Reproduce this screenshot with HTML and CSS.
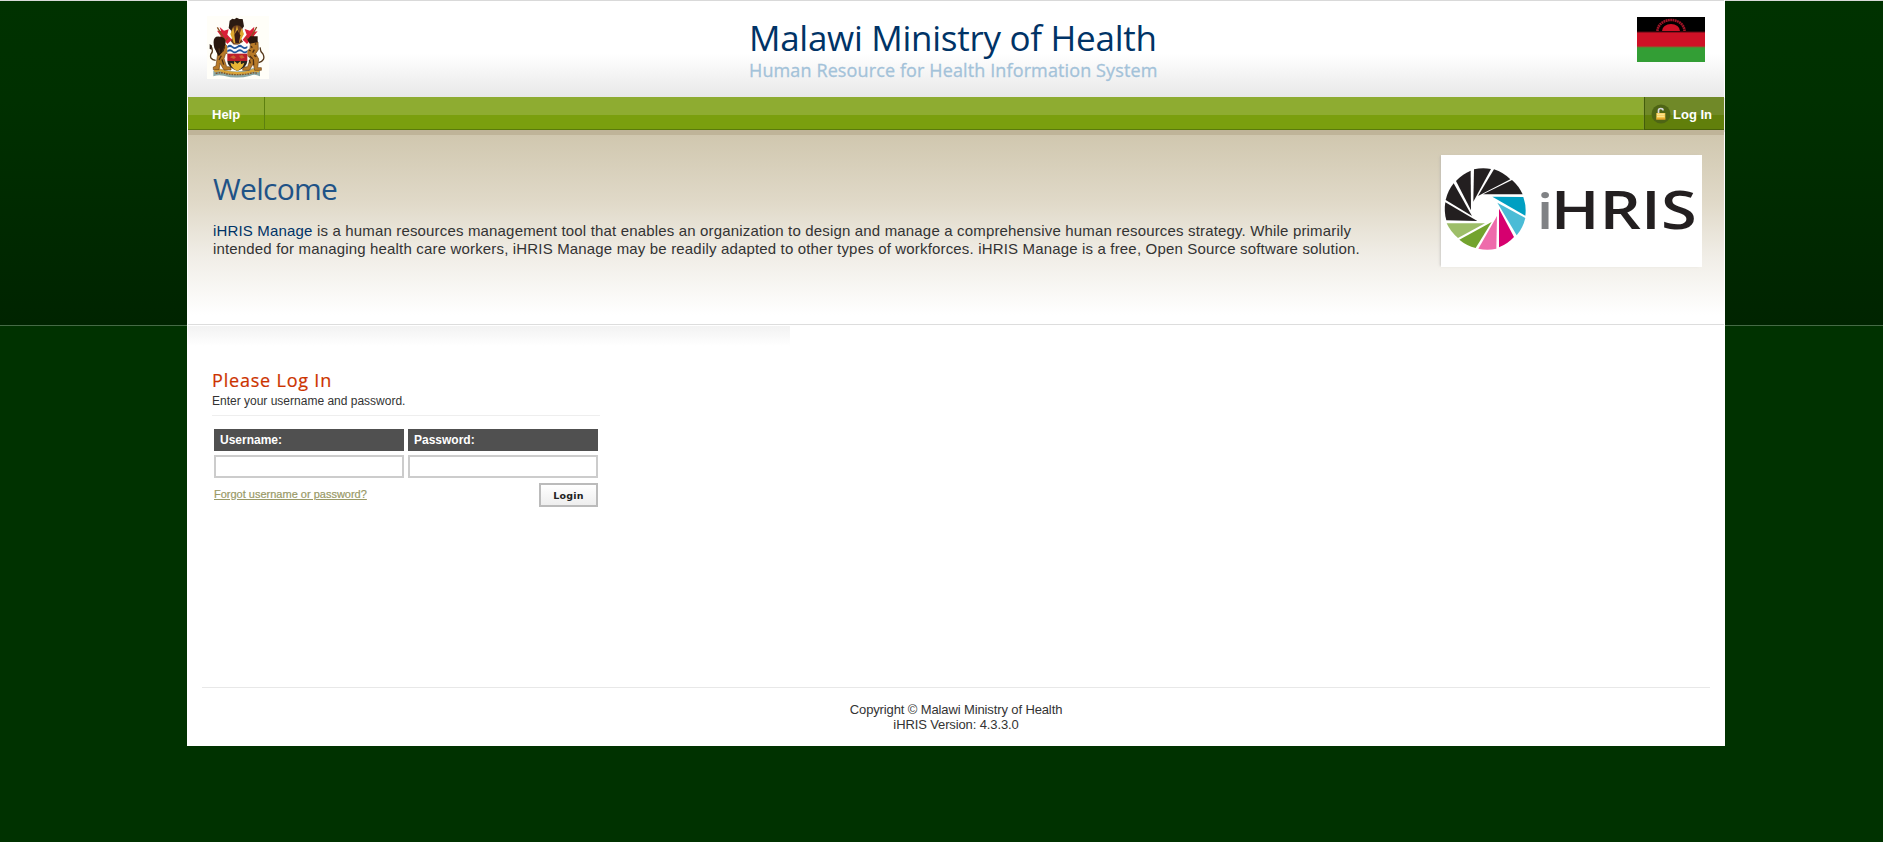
FILE: index.html
```html
<!DOCTYPE html>
<html lang="en">
<head>
<meta charset="utf-8">
<title>Malawi Ministry of Health</title>
<link rel="stylesheet" href="styles.css">
</head>
<body>
<div class="page">
  <header class="header">
    <svg class="arms" viewBox="81 48 186 189">
      <rect x="81" y="48" width="186" height="189" fill="#fffef8"/>
      <path d="M100 212q12-10 24-5q45 16 94-2q14-2 22 7v17q-16-9-29-2q-40 11-80 0q-17-4-31 2z" fill="#88a6a4"/>
      <path d="M103 214q18-7 29 1q41 10 79 0q12-7 27-1" fill="none" stroke="#dba438" stroke-width="8"/>
      <path d="M107 220q22-4 30 1q35 6 72 0q11-5 25-1" fill="none" stroke="#81562b" stroke-width="4" stroke-dasharray="5 3"/>
      <path d="M146 84l3-22 8-6 6 2 7-5 8 4 10 0 4 22-9 13h-29z" fill="#2c1b12"/>
      <path d="M154 96q0-20 17-20t17 20l-7 17 8 12-15 9h-13l-10-12 9-13z" fill="#6d3e1c"/>
      <path d="M151 102l9-20 4 22 7-28 7 29 7-20 7 17-15 28h-15z" fill="#dda72e"/>
      <path d="M163 104l9-15 9 17-4 23h-11z" fill="#391c15"/>
      <path d="M119 81l13 11 14-4-4 16 14 15-14 13-10-13-13 8 3-20-11-15 12 1zM223 80l-13 12-16-5 6 17-12 15 13 13 11-13 13 8-3-20 11-13-12 1z" fill="#d91f38"/>
      <path d="M112 82l24 40 8-9M230 81l-23 41-9-10" fill="none" stroke="#8a5122" stroke-width="4"/>
      <g fill="#b87a28" stroke="#6b421a" stroke-width="2">
        <path d="M106 137l29-5 16 17-1 14-13-3-5 16 8 24 13 1v9h-21l-12-20-3 19h-17v-8l8-3 5-36z"/>
        <path d="M212 121l22 5 1 23-8 12 9 16-3 26h11v8h-20l-4-20-12 20h-20l1-9 14-2 8-25-18-16 17-13z"/>
      </g>
      <path d="M103 144q-9-39 17-34 16-1 17 18l-6 24-15 17zM202 119l9-10h22v18l-24 4z" fill="#29170d"/>
      <path d="M107 181q-20-3-14-19 9-9-1-25M236 188q22-7 13-26-10-9-8-20" fill="none" stroke="#543719" stroke-width="4"/>
      <path d="M89 132l7 5-2 13-5-5z" fill="#29170d"/>
      <path d="M213 139l4 4m8-12l4 2m-22 17l5 3m11-4l-5 9m4 8l7 4m-20-2l9 8m-10 4l3 10m9-12l1 18m-87-55l-7 15m-10-11l2 14m5 8l-7 13m9-2l5 16" stroke="#4b2d14" stroke-width="4"/>
      <path d="M142 134h60v50q-3 17-30 29-27-12-30-29z" fill="#faf9fa"/>
      <path d="M142 138q8-7 15 0t15 0 15 0 15 0v6q-8 6-15 0t-15 0-15 0-15 0zM142 151q8-7 15 0t15 0 15 0 15 0v6q-8 6-15 0t-15 0-15 0-15 0z" fill="#21569c"/>
      <path d="M142 161h60v22h-60z" fill="#bc1f2b"/>
      <path d="M150 172l10-6 8 6-6 5zm27-5l10-2 7 8-11 3z" fill="#c9622f"/>
      <path d="M142 183h60q-1 19-30 30-29-11-30-30z" fill="#29231f"/>
      <path d="M154 198l-3-10 11 5 1-10 9 8 10-8 1 10 10-5-4 11q-5 7-17 14-13-6-18-15z" fill="#e8b535"/>
    </svg>
    <div class="titles">
      <h1 class="title">Malawi Ministry of Health</h1>
      <p class="subtitle">Human Resource for Health Information System</p>
    </div>
    <svg class="flag" viewBox="0 0 68 45">
      <rect width="68" height="45" fill="#000"/>
      <rect y="15" width="68" height="15" fill="#ce1126"/>
      <rect y="30" width="68" height="15" fill="#339e35"/>
      <path d="M25 14a9 7 0 0 1 18 0z" fill="#ce1126"/>
      <path d="M20.500 14a13.500 11 0 0 1 27 0" fill="none" stroke="#a01326" stroke-width="2.600" stroke-dasharray="1.800 .5"/>
      <path d="M0 15h68" stroke="#5b0912"/>
      <path d="M0 30h68" stroke="#7d6b2c"/>
    </svg>
  </header>
  <nav class="nav">
    <a class="help">Help</a>
    <a class="login-link">
      <svg class="lock" viewBox="0 0 20 20">
        <circle cx="10" cy="10" r="9.500" fill="#4e6515"/>
        <path d="M7.500 9V6.500Q7.500 4.500 9.800 4.500T12 6.500" fill="none" stroke="#d9d9df" stroke-width="1.700"/>
        <rect x="5.300" y="9" width="9" height="6.500" fill="#f3c64b"/>
        <path d="M6 10.200h7.500M6 12.200h7.500" stroke="#fff3ac"/>
        <path d="M5.300 15h9" stroke="#d99117"/>
      </svg>
      <span>Log In</span>
    </a>
  </nav>
  <section class="welcome">
    <div class="intro">
      <h2 class="welcome-title">Welcome</h2>
      <p class="blurb"><span class="product">iHRIS Manage</span> is a human resources management tool that enables an organization to design and manage a comprehensive human resources strategy. While primarily<br>intended for managing health care workers, iHRIS Manage may be readily adapted to other types of workforces. iHRIS Manage is a free, Open Source software solution.</p>
    </div>
    <svg class="logo" viewBox="63 45 783 336">
      <rect x="63" y="45" width="783" height="336" fill="#fff"/>
      <g fill="#231f20">
        <path d="M172 243L79 241A123 123 0 0 1 76 187z"/>
        <path d="M156 228L77 180A123 123 0 0 1 101 130z"/>
        <path d="M153 211L108 123A123 123 0 0 1 152 92z"/>
        <path d="M160 185L162 88A123 123 0 0 1 213 87z"/>
        <path d="M174 168L222 88A123 123 0 0 1 271 118z"/>
        <path d="M189 163L276 120A123 123 0 0 1 308 163z"/>
      </g>
      <path d="M217 170L310 171A123 123 0 0 1 316 227z" fill="#009fc2"/>
      <path d="M232 188L316 234A123 123 0 0 1 290 286z" fill="#4bbcd6"/>
      <path d="M237 206L282 291A123 123 0 0 1 237 322z" fill="#d6006f"/>
      <path d="M231 228L229 326A123 123 0 0 1 175 326z" fill="#ee6bab"/>
      <path d="M215 246L167 324A123 123 0 0 1 118 299z" fill="#73a32e"/>
      <path d="M195 250L114 294A123 123 0 0 1 80 250z" fill="#9dbe68"/>
      <text class="logo-text logo-i" x="350" y="266" textLength="50" lengthAdjust="spacingAndGlyphs">i</text>
      <text class="logo-text" x="392" y="266" textLength="438" lengthAdjust="spacingAndGlyphs">HRIS</text>
    </svg>
  </section>
  <main class="content">
    <div class="shade"></div>
    <form class="login">
      <h3 class="login-title">Please Log In</h3>
      <p class="hint">Enter your username and password.</p>
      <div class="fields">
        <label class="label" for="user">Username:</label>
        <label class="label" for="pass">Password:</label>
        <input class="input" id="user" type="text">
        <input class="input" id="pass" type="password">
      </div>
      <div class="actions">
        <a class="forgot">Forgot username or password?</a>
        <button class="button" type="button">Login</button>
      </div>
    </form>
  </main>
  <footer class="footer">Copyright © Malawi Ministry of Health<br>iHRIS Version: 4.3.3.0</footer>
</div>
</body>
</html>
```
FILE: styles.css
```css
* { box-sizing: border-box; }
html { background: #003000; }
body {
  margin: 0;
  min-height: 842px;
  font-family: "Liberation Sans", Arial, sans-serif;
  color: #333;
  background: linear-gradient(#d9d9d9, #d9d9d9) 0 0 / 100% 1px no-repeat,
    linear-gradient(#466b46, #466b46) 0 325px / 100% 1px no-repeat,
    linear-gradient(#003200 0, #003000 100px, #002400 325px) 0 0 / 100% 325px no-repeat,
    #003200;
}
h1, h2, h3, p { margin: 0; font-weight: 400; }
.page { width: 1538px; height: 746px; margin-left: 187px; background: #fff; border: solid #fff; border-width: 0 1px; display: flex; flex-direction: column; }
.header { height: 97px; border-top: 1px solid #d9d9d9; background: linear-gradient(#fff 55%, #e8e8e8); display: flex; justify-content: space-between; padding: 15px 19px 0; }
.arms { width: 62px; height: 63px; }
.titles { width: 410px; margin-left: 2px; font-family: "Open Sans", sans-serif; white-space: nowrap; }
.title { font-size: 35px; line-height: 44px; color: #003366; letter-spacing: -.28px; }
.subtitle { font-size: 18px; font-weight: 500; line-height: 20px; color: #a3c2d9; letter-spacing: .12px; -webkit-text-stroke: .3px; }
.flag { width: 68px; height: 45px; margin-top: 1px; }
.nav { height: 33px; background: linear-gradient(#8eac31 0 18px, #7a9f0e 18px 32px, #5a7a0b 32px); display: flex; justify-content: space-between; color: #fff; font-weight: 700; font-size: 13px; line-height: 35px; }
.help { width: 77px; height: 34px; padding-left: 24px; border-right: 1px solid #5d8010; }
.login-link { width: 80px; height: 34px; padding-left: 6px; border-left: 1px solid #435d0c; background: linear-gradient(#708928 0 18px, #617f0b 18px 32px, #48610a 32px); display: flex; align-items: center; gap: 2px; box-shadow: 0 1px 1px #8b8370; }
.lock { width: 20px; height: 20px; }
.welcome { height: 194px; background: linear-gradient(#bfb499 0 5px, transparent 5px), linear-gradient(#cfc6ad 0, #e0d9c8 72px, #f0ede6 125px, #fff 185px); display: flex; justify-content: space-between; padding: 25px 22px 0 25px; }
.intro { padding-top: 13px; white-space: nowrap; }
.welcome-title { font-family: "Open Sans", sans-serif; font-size: 30px; line-height: 42px; color: #1f5387; letter-spacing: -.7px; }
.blurb { margin-top: 12px; font-size: 15px; line-height: 18px; letter-spacing: .166px; }
.product { color: #003366; }
.logo { width: 261px; height: 112px; box-shadow: -2px 0 2px -1px #aaa8; }
.logo-text { font: 600 155px "Open Sans", sans-serif; fill: #231f20; }
.logo-i { fill: #808285; font-size: 147px; }
.content { height: 363px; border-top: 1px solid #ddd; }
.shade { width: 602px; height: 20px; margin-top: 1px; background: linear-gradient(#f2f2f2, #fff); }
.login { width: 388px; margin: 22px 0 0 24px; }
.login-title { font-family: "Open Sans", sans-serif; font-size: 18px; line-height: 24px; color: #c30; letter-spacing: .8px; -webkit-text-stroke: .2px; }
.hint { height: 24px; padding-top: 1px; font-size: 12px; line-height: 16px; border-bottom: 1px solid #eee; }
.fields { display: grid; grid-template-columns: 190px 190px; grid-template-rows: 22px 23px; gap: 4px; padding: 13px 2px 0; }
.label { background: #505050; color: #fff; font-size: 12px; font-weight: 700; line-height: 22px; padding-left: 6px; }
.input { width: 190px; height: 23px; border: 2px solid #ccc; background: #fff; padding: 2px; }
.actions { display: flex; justify-content: space-between; padding: 5px 2px 0; }
.forgot { font-size: 11px; line-height: 22px; color: #999966; text-decoration: underline; -webkit-text-stroke: .2px; }
.button { width: 59px; height: 24px; padding: 1px 0 0; border: 2px solid #bbb; background: linear-gradient(#fff, #eee); font: 700 9.5px "DejaVu Sans", sans-serif; letter-spacing: .2px; color: #222; }
.footer { height: 59px; margin: 0 14px; border-top: 1px solid #e8e8e8; padding-top: 14px; font-size: 13px; line-height: 15px; letter-spacing: -.12px; text-align: center; }
```
